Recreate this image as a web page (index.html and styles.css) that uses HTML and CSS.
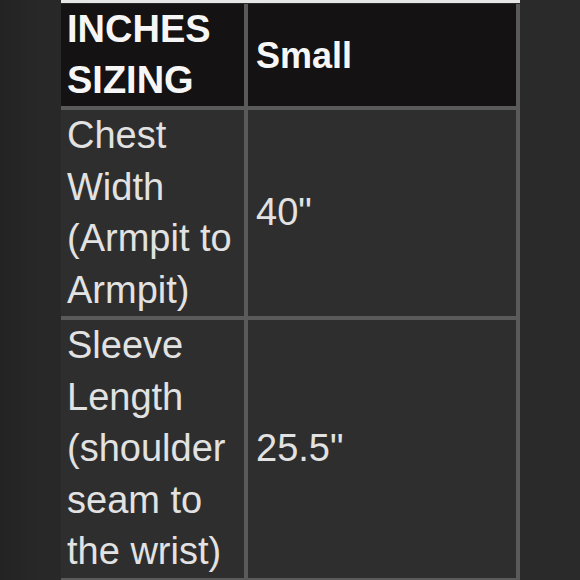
FILE: index.html
```
<!DOCTYPE html>
<html>
<head>
<meta charset="utf-8">
<link rel="stylesheet" href="styles.css">
</head>
<body>
<div class="page">
  <div class="sheet">
    <div class="topline"></div>
    <table class="sizes">
      <tr class="head">
        <td class="c1">INCHES SIZING</td>
        <td class="c2">Small</td>
      </tr>
      <tr class="r1">
        <td class="c1">Chest Width (Armpit to Armpit)</td>
        <td class="c2">40"</td>
      </tr>
      <tr class="r2">
        <td class="c1">Sleeve Length (shoulder seam to the wrist)</td>
        <td class="c2">25.5"</td>
      </tr>
    </table>
  </div>
</div>
</body>
</html>
```
FILE: styles.css
```
html, body {
  margin: 0;
  padding: 0;
}
body {
  width: 580px;
  height: 580px;
  overflow: hidden;
  background: linear-gradient(90deg, #232323 0px, #282828 40px, #2b2b2b 300px, #2a2a2a 580px);
  font-family: "Liberation Sans", Arial, sans-serif;
}
.page {
  padding-left: 61px;
}
.sheet {
  width: 459px;
}
.topline {
  height: 3px;
  background: #e6e6e6;
  margin-bottom: 1px;
}
.sizes {
  border-collapse: separate;
  border-spacing: 0;
  table-layout: fixed;
  width: 459px;
}
.sizes td {
  box-sizing: border-box;
  padding: 0 4px 0 6px;
  border-right: 4px solid #5a5a5a;
  border-bottom: 4px solid #5a5a5a;
  background: #2e2e2e;
  color: #e2e2e2;
  font-size: 38px;
  line-height: 51.5px;
  vertical-align: middle;
}
.sizes .c1 {
  width: 187px;
}
.sizes .c2 {
  width: 272px;
  padding-left: 8px;
}
.sizes .head td {
  background: #141212;
  color: #f6f6f6;
  font-weight: bold;
  line-height: 51px;
}
.sizes .head .c2 {
  font-size: 36px;
}
```
